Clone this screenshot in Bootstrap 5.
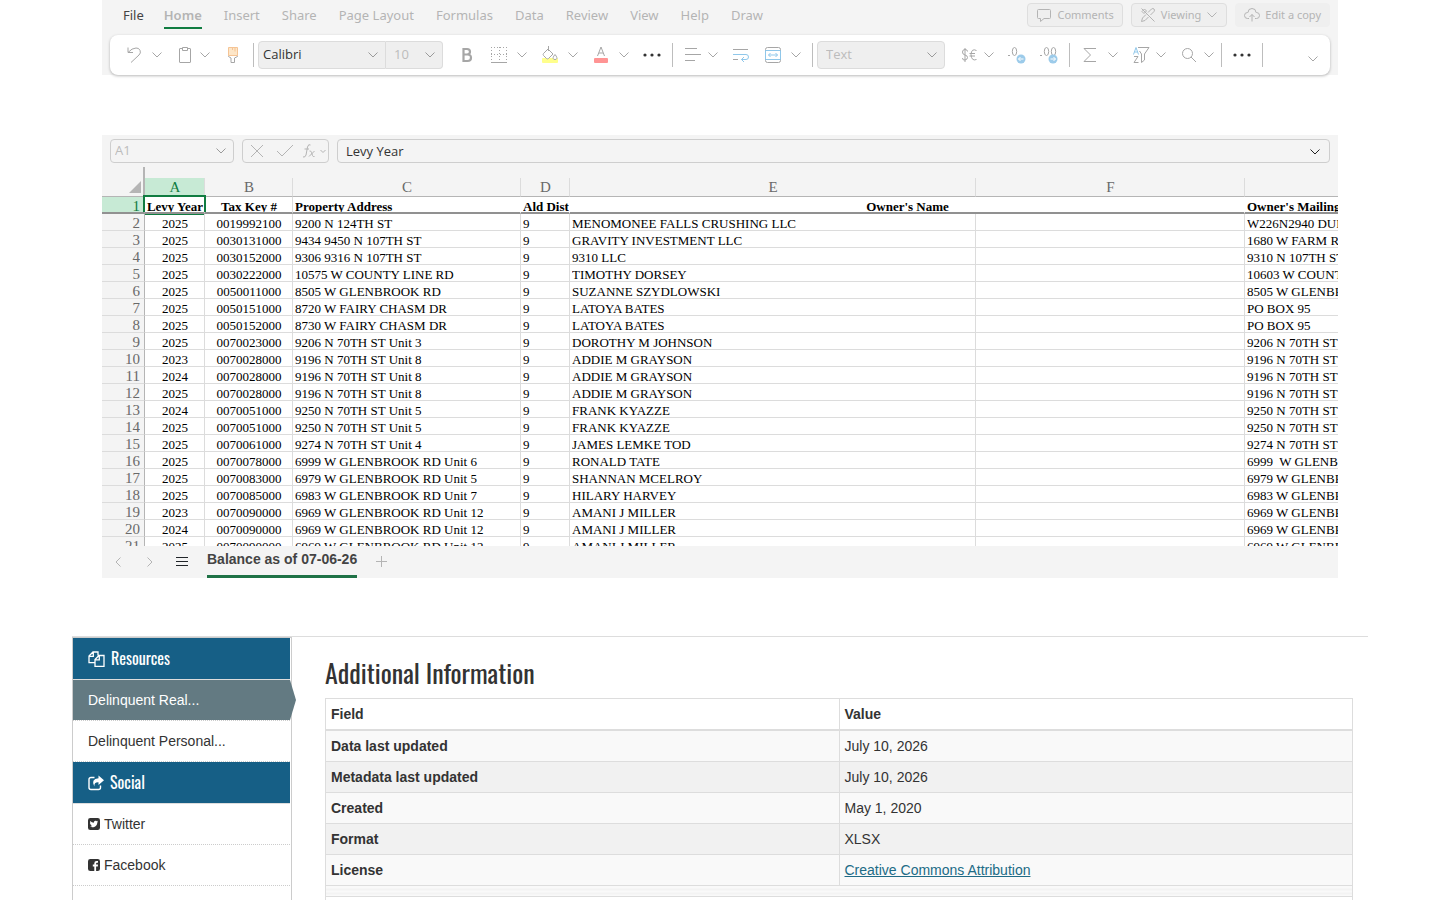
<!DOCTYPE html>
<html lang="en">
<head>
  <meta charset="UTF-8">
  <title>Delinquent Real Estate Tax Accounts</title>
  <meta name="viewport" content="width=device-width, initial-scale=1.0">
  <link href="https://cdn.jsdelivr.net/npm/bootstrap@5.3.3/dist/css/bootstrap.min.css" rel="stylesheet">
  <style>
    body {
      font-family: "Liberation Sans", Arial, sans-serif;
      font-size: 14px;
      line-height: 20px;
      color: #333;
      background: #fff;
    }
    svg {
      display: block;
      fill: none;
      stroke: currentColor;
    }
    .page-wrap {
      padding: 0 72px;
    }
    .viewer {
      margin: 0 30px;
      font-family: "Noto Sans", "Open Sans", sans-serif;
      font-size: 13px;
      color: #b4b4b4;
    }

    /* ribbon */
    .ribbon {
      background: #f4f4f4;
      padding: 0 8px;
      margin-bottom: 60px;
    }
    .ribbon-top {
      height: 35px;
      padding: 3px 0 0 13px;
    }
    .ribbon-nav { gap: 22px; }
    .ribbon-tab {
      color: inherit;
      text-decoration: none;
      height: 26px;
      line-height: 24px;
      border-bottom: 2px solid transparent;
    }
    .ribbon-tab.file-tab {
      color: #444;
      margin-right: -2px;
    }
    .ribbon-tab.active {
      font-weight: 600;
      border-color: #107c41;
    }
    .ribbon-btn {
      display: flex;
      align-items: center;
      gap: 5px;
      height: 24px;
      padding: 0 8px;
      font-size: 11px;
      color: inherit;
      background: #efefef;
      border: 1px solid #dedede;
      border-radius: 4px;
      white-space: nowrap;
    }
    .ribbon-btn.flat { border-color: #efefef; }
    .toolbar {
      height: 40px;
      padding: 0 9px 0 12px;
      gap: 8px;
      background: #fff;
      border-radius: 8px;
      box-shadow: 0 1px 3px rgba(0, 0, 0, .28);
      color: #a6a6a6;
    }
    .toolbar > * { flex-shrink: 0; }
    .tool, .tool-arrow, .plain-btn {
      display: flex;
      align-items: center;
      justify-content: center;
      flex-shrink: 0;
      height: 24px;
      width: 24px;
      padding: 0;
      border: 0;
      background: none;
      color: inherit;
    }
    .tool-arrow { width: 16px; }
    .wide-split { gap: 3px; }
    .tight { margin-left: -4px; }
    .roomy { margin-left: 4px; }
    .rule {
      width: 1px;
      height: 24px;
      background: #bdbdbd;
    }
    .tool-select {
      height: 28px;
      padding: 0 24px 0 8px;
      font-family: "Open Sans", "Noto Sans", sans-serif;
      font-size: 13px;
      color: #bcbcbc;
      border: 1px solid #dcdcdc;
      border-radius: 4px;
      background-color: #efefef;
      background-image: url("data:image/svg+xml,%3Csvg xmlns='http://www.w3.org/2000/svg' viewBox='0 0 12 12' fill='none' stroke='%239a9a9a'%3E%3Cpath d='M1.5 3.5 6 8l4.500-4.500'/%3E%3C/svg%3E");
      background-size: 12px 12px;
      background-position: right 6px center;
    }
    .font-name {
      width: 128px;
      padding-left: 4px;
      color: #333;
      border-radius: 4px 0 0 4px;
    }
    .font-size {
      width: 57px;
      border-left: 0;
      border-radius: 0 4px 4px 0;
    }
    .num-format { width: 128px; }

    /* formula bar */
    .workbook { background: #f4f4f4; }
    .formula-bar {
      padding: 4px 8px;
      gap: 8px;
    }
    .cell-ref {
      width: 124px;
      height: 24px;
      padding-left: 4px;
      background-color: #f4f4f4;
      border-color: #cecece;
    }
    .fx-box {
      width: 87px;
      height: 24px;
      padding-left: 2px;
      border: 1px solid #cecece;
      border-radius: 4px;
    }
    .fx-arrow { width: 12px; }
    .formula-box {
      height: 24px;
      padding-right: 2px;
      border: 1px solid #cecece;
      border-radius: 4px;
      color: #222;
    }
    .formula-input {
      border: 0;
      outline: 0;
      background: none;
      padding: 0 8px;
      font-family: "Open Sans", "Noto Sans", sans-serif;
      font-size: 13px;
      line-height: 20px;
      color: #333;
    }

    /* sheet */
    .freeze-gap {
      height: 11px;
      width: 43px;
      border-right: 2px solid #b5b5b5;
    }
    .sheet-view {
      height: 368px;
      overflow: hidden;
      font-family: "Liberation Serif", "Times New Roman", serif;
    }
    .sheet {
      width: 100%;
      table-layout: fixed;
      border-collapse: separate;
      border-spacing: 0;
      color: #000;
      background: #fff;
    }
    .sheet th, .sheet td {
      height: 17px;
      padding: 0 0 0 2px;
      font-size: 13px;
      line-height: 16px;
      white-space: nowrap;
      overflow: hidden;
      border: 0 solid #dcdcdc;
      border-width: 0 1px 1px 0;
    }
    .sheet .text-center { padding-left: 1px; }
    .sheet tr > :last-child { border-right: 0; }
    .sheet div {
      height: 16px;
      padding-top: 2px;
      overflow: hidden;
    }
    .sheet .letters th {
      height: 19px;
      padding-left: 1px;
      font-size: 15px;
      line-height: 18px;
      font-weight: 400;
      text-align: center;
      color: #696969;
      background: #f4f4f4;
      border-bottom-color: #b5b5b5;
    }
    .sheet .letters .corner {
      border-right: 2px solid #b5b5b5;
    }
    .corner svg {
      margin-left: auto;
      margin-right: 2px;
      fill: #b5b5b5;
      stroke: none;
    }
    .sheet .row-no {
      padding: 0 4px 0 0;
      font-size: 15px;
      font-weight: 400;
      text-align: right;
      color: #696969;
      background: #f4f4f4;
      border-right-color: #b5b5b5;
    }
    .sheet .letters .picked, .sheet .row-no.picked {
      color: #107c41;
      background: #c7ead5;
    }
    .sheet .titles th {
      border-bottom: 2px solid #919191;
    }
    .sheet .titles div { height: 15px; }
    .sheet .row-no div { padding-top: 1px; }
    .sheet .titles th:nth-child(n+4) { border-right-color: transparent; }
    .sheet .titles .active-cell {
      position: relative;
      overflow: visible;
    }
    .active-cell::after {
      content: "";
      position: absolute;
      inset: -2px -2px 0 -2px;
      border: 2px solid #107c41;
      border-bottom: 0;
    }
    #sheetRows tr:first-child td:nth-child(2) { box-shadow: inset 0 1px #107c41; }
    .sheet-bar {
      height: 32px;
      padding-left: 4px;
      gap: 8px;
    }
    .sheet-tab {
      height: 32px;
      margin: 0 5px;
      line-height: 27px;
      font-family: "Liberation Sans", Arial, sans-serif;
      font-size: 14px;
      font-weight: 700;
      color: #444;
      text-decoration: none;
      border-bottom: 3px solid #1f7246;
    }

    /* dataset details */
    .details {
      margin-top: 58px;
      border-top: 1px solid #ddd;
    }
    .side-nav {
      width: 220px;
      border: 1px solid #ccc;
      border-bottom: 0;
      padding-right: 1px;
    }
    .narrow-head {
      font-family: Oswald, "Liberation Sans Narrow", "Roboto Condensed", "Liberation Sans", sans-serif;
      font-weight: 400;
    }
    .side-title {
      display: flex;
      align-items: center;
      gap: 6px;
      height: 42px;
      margin: 0;
      padding: 0 15px;
      font-size: 16px;
      color: #fff;
      background: #165f86;
      border-bottom: 1px solid #ddd;
    }
    .side-link {
      display: flex;
      align-items: center;
      gap: 4px;
      height: 41px;
      padding: 0 15px;
      color: #333;
      text-decoration: none;
      border-bottom: 1px dotted #ccc;
    }
    .side-link.active {
      position: relative;
      color: #fff;
      background: #637a82;
      background-clip: padding-box;
    }
    .side-link.active::after {
      content: "";
      position: absolute;
      left: 100%;
      top: 0;
      width: 6px;
      height: 100%;
      background: #637a82;
      clip-path: polygon(0 0, 100% 50%, 0 100%);
    }
    .details-main { padding: 16px 15px 0 33px; }
    .details-title {
      font-size: 26px;
      line-height: 40px;
      margin: 0 0 5px;
    }
    .info-table {
      margin: 0;
      table-layout: fixed;
      border-color: #ddd;
    }
    .info-table > :not(caption) > * > * {
      padding: 5px;
      color: #333;
      border: 1px solid #ddd;
      background: #f9f9f9;
    }
    .info-table > thead > tr > th {
      background: #fff;
      border-bottom: 2px solid #ddd;
    }
    .info-table > tbody > tr:nth-child(even) > * { background: #f1f1f1; }
    .info-table > tbody > tr.folded > td {
      height: 11px;
      padding: 0;
      background: repeating-linear-gradient(#f9f9f9 0 2px, #f3f3f3 2px 4px);
    }
    .info-table a { color: #206b86; }
    .info-rest {
      border: 1px solid #ddd;
      border-width: 0 1px;
    }
  </style>
</head>
<body>

<svg class="d-none">
  <symbol id="chev" viewBox="0 0 12 12"><path d="M1.500 3.500 6 8l4.500-4.500"/></symbol>
  <symbol id="dots" viewBox="0 0 20 6"><g fill="#333" stroke="none"><circle cx="3" cy="3" r="1.600"/><circle cx="10" cy="3" r="1.600"/><circle cx="17" cy="3" r="1.600"/></g></symbol>
</svg>

<div class="page-wrap d-flex flex-column min-vh-100">
  <div class="viewer">

    <div class="ribbon">
      <div class="ribbon-top d-flex justify-content-between align-items-start">
        <nav class="ribbon-nav d-flex">
          <a class="ribbon-tab file-tab" href="#">File</a>
          <a class="ribbon-tab active" href="#">Home</a>
          <a class="ribbon-tab" href="#">Insert</a>
          <a class="ribbon-tab" href="#">Share</a>
          <a class="ribbon-tab" href="#">Page Layout</a>
          <a class="ribbon-tab" href="#">Formulas</a>
          <a class="ribbon-tab" href="#">Data</a>
          <a class="ribbon-tab" href="#">Review</a>
          <a class="ribbon-tab" href="#">View</a>
          <a class="ribbon-tab" href="#">Help</a>
          <a class="ribbon-tab" href="#">Draw</a>
        </nav>
        <div class="d-flex gap-2">
          <button class="ribbon-btn" type="button">
            <svg width="16" height="16" viewBox="0 0 16 16"><path d="M2.500 2.500h11a1 1 0 0 1 1 1v7a1 1 0 0 1-1 1H8L4.500 14.500v-3h-2a1 1 0 0 1-1-1v-7a1 1 0 0 1 1-1z"/></svg>
            Comments
          </button>
          <button class="ribbon-btn" type="button">
            <svg width="16" height="16" viewBox="0 0 16 16"><path d="m1.500 1.500 13 13M6 7.500 2.500 11l-1 3.500L5 13.500 8.500 10M8 5.500l3.500-3.500q1.500-1 2.500 0t0 2.500L10.500 8M2 4.500 4.500 2l2 2-2.500 2.500z"/></svg>
            Viewing
            <svg width="12" height="12"><use href="#chev"/></svg>
          </button>
          <button class="ribbon-btn flat" type="button">
            <svg width="16" height="16" viewBox="0 0 16 16"><path d="M5 11.500H3.500a3 3 0 0 1 0-6h.5a4 4 0 0 1 8 0h.5a3 3 0 0 1 0 6H11M8 14.500v-7M5.500 10 8 7.500l2.500 2.500"/></svg>
            Edit a copy
          </button>
        </div>
      </div>

      <div class="toolbar d-flex align-items-center">
        <div class="d-flex wide-split">
          <button class="tool" type="button" aria-label="Undo"><svg width="16" height="18" viewBox="0 0 16 18"><path d="M2 1.500v5h5M2 6.500q4-4.500 8-4.500a4 4 0 0 1 3 7L5 16.500"/></svg></button>
          <button class="tool-arrow" type="button" aria-label="Undo list"><svg width="12" height="12"><use href="#chev"/></svg></button>
        </div>
        <div class="d-flex">
          <button class="tool" type="button" aria-label="Paste"><svg width="14" height="18" viewBox="0 0 14 18"><path d="M4 2.500H2a.5.5 0 0 0-.5.5v13a.5.5 0 0 0 .5.500h10a.5.5 0 0 0 .5-.5V3a.5.5 0 0 0-.5-.5h-2M4.500 1.500h5v3h-5z"/></svg></button>
          <button class="tool-arrow" type="button" aria-label="Paste options"><svg width="12" height="12"><use href="#chev"/></svg></button>
        </div>
        <button class="tool" type="button" aria-label="Format painter"><svg width="12" height="18" viewBox="0 0 12 18"><path d="M1.500 9.500v1l2.500 1.500v4.500h3.500V12l3-1.500v-1"/><path fill="#fde6c8" stroke="#f5c495" d="M1.500 1.500h9v8h-9z"/><path stroke="#f5c495" d="M5.500 1.500V4M8 1.500v4"/></svg></button>
        <span class="rule"></span>
        <div class="d-flex tight">
          <select class="form-select tool-select font-name" aria-label="Font"><option>Calibri</option></select>
          <select class="form-select tool-select font-size" aria-label="Font size"><option>10</option></select>
        </div>
        <button class="tool roomy" type="button" aria-label="Bold"><svg width="12" height="16" viewBox="0 0 12 16"><path stroke-width="2.200" d="M2.500 2v12h4q3.500 0 3.500-3.300T6.500 7.500h-4H6q3-.2 3-2.800T6 2z"/></svg></button>
        <div class="d-flex wide-split">
          <button class="tool" type="button" aria-label="Borders"><svg width="18" height="18" viewBox="0 0 18 18"><path stroke-dasharray="1 2" d="M1 1.500h16M1 8.500h16M1.500 1v15M9.500 1v15M16.500 1v15"/><path d="M1 16.500h16"/></svg></button>
          <button class="tool-arrow" type="button" aria-label="Border list"><svg width="12" height="12"><use href="#chev"/></svg></button>
        </div>
        <div class="d-flex wide-split">
          <button class="tool" type="button" aria-label="Fill color"><svg width="18" height="18" viewBox="0 0 18 18"><rect x="1" y="12" width="16" height="5" rx="1" fill="#ffff8c" stroke="none"/><path fill="#fff" d="m7 3 5 5-4.500 4.500q-1 .8-2 0l-3-3q-.8-1 0-2zM7.500 0v5M14 8.500q3 3.500 1.300 4.700-1.300.8-2.600 0Q11 12 14 8.500z"/></svg></button>
          <button class="tool-arrow" type="button" aria-label="Fill colors"><svg width="12" height="12"><use href="#chev"/></svg></button>
        </div>
        <div class="d-flex wide-split">
          <button class="tool" type="button" aria-label="Font color"><svg width="16" height="18" viewBox="0 0 16 18"><rect x="1" y="12" width="14" height="5" rx="1" fill="#ff9494" stroke="none"/><path d="m4.500 10 3.500-9 3.500 9M6 7h4"/></svg></button>
          <button class="tool-arrow" type="button" aria-label="Font colors"><svg width="12" height="12"><use href="#chev"/></svg></button>
        </div>
        <button class="tool" type="button" aria-label="More font options"><svg width="20" height="6"><use href="#dots"/></svg></button>
        <span class="rule"></span>
        <div class="d-flex">
          <button class="tool" type="button" aria-label="Alignment"><svg width="18" height="16" viewBox="0 0 18 16"><path d="M1 1.500h12M1 7.500h16M1 13.500h10"/></svg></button>
          <button class="tool-arrow" type="button" aria-label="Alignment list"><svg width="12" height="12"><use href="#chev"/></svg></button>
        </div>
        <button class="tool" type="button" aria-label="Wrap text"><svg width="18" height="16" viewBox="0 0 18 16"><path d="M1 2.500h15M1 12.500h5"/><path stroke="#8fc7ea" d="M1 7.500h13a2.500 2.500 0 0 1 0 5H9.500M12 10l-2.500 2.500L12 15"/></svg></button>
        <div class="d-flex wide-split">
          <button class="tool" type="button" aria-label="Merge cells"><svg width="18" height="16" viewBox="0 0 18 16"><rect x="1.500" y=".5" width="15" height="15" rx="2"/><path stroke="#8fc7ea" d="M1.500 3.500h15v9h-15zM4.500 8h9M6.500 6l-2 2 2 2M11.500 6l2 2-2 2"/></svg></button>
          <button class="tool-arrow" type="button" aria-label="Merge list"><svg width="12" height="12"><use href="#chev"/></svg></button>
        </div>
        <span class="rule"></span>
        <select class="form-select tool-select num-format tight" aria-label="Number format"><option>Text</option></select>
        <div class="d-flex roomy">
          <button class="tool" type="button" aria-label="Currency"><svg width="16" height="16" viewBox="0 0 16 16"><path d="M6.500 4.500q0-2-2.500-2t-2.500 2.500T4 8t2.500 2.500-2.500 2.500-2.500-2M4 1v14M15.500 3.500q-5-2.500-5.500 4 .5 7 5.500 5M8.500 6.500H14M8.500 9H14"/></svg></button>
          <button class="tool-arrow" type="button" aria-label="Currency list"><svg width="12" height="12"><use href="#chev"/></svg></button>
        </div>
        <button class="tool" type="button" aria-label="Increase decimal"><svg width="18" height="18" viewBox="0 0 18 18"><path d="M0 9.500h2"/><ellipse cx="6.500" cy="5.500" rx="2.200" ry="4"/><circle cx="13" cy="13" r="4.500" fill="#9ccbea" stroke="none"/><path stroke="#fff" d="M15.500 13h-5M12.500 11l-2 2 2 2"/></svg></button>
        <button class="tool" type="button" aria-label="Decrease decimal"><svg width="18" height="18" viewBox="0 0 18 18"><path d="M0 9.500h2"/><ellipse cx="6.500" cy="5.500" rx="2.200" ry="4"/><ellipse cx="13.500" cy="5.500" rx="2.200" ry="4"/><circle cx="13" cy="13" r="4.500" fill="#9ccbea" stroke="none"/><path stroke="#fff" d="M10.500 13h5M13.500 11l2 2-2 2"/></svg></button>
        <span class="rule"></span>
        <div class="d-flex wide-split">
          <button class="tool" type="button" aria-label="AutoSum"><svg width="16" height="16" viewBox="0 0 16 16"><path d="M14 1.500H2L8.500 8 2 14.500h12"/></svg></button>
          <button class="tool-arrow" type="button" aria-label="Functions"><svg width="12" height="12"><use href="#chev"/></svg></button>
        </div>
        <div class="d-flex">
          <button class="tool" type="button" aria-label="Sort and filter"><svg width="18" height="18" viewBox="0 0 18 18"><path stroke="#8fc7ea" d="m1.500 8.500 2.500-7 2.500 7M2.500 6h3"/><path d="M2 10.500h4l-4 6h4.500M6 1.500h11L12.500 8v6L9.500 16.500V8L7.500 5"/></svg></button>
          <button class="tool-arrow" type="button" aria-label="Sort list"><svg width="12" height="12"><use href="#chev"/></svg></button>
        </div>
        <div class="d-flex">
          <button class="tool" type="button" aria-label="Find"><svg width="16" height="16" viewBox="0 0 16 16"><circle cx="6.500" cy="6.500" r="5"/><path d="m10 10 5 5"/></svg></button>
          <button class="tool-arrow" type="button" aria-label="Find list"><svg width="12" height="12"><use href="#chev"/></svg></button>
        </div>
        <span class="rule tight"></span>
        <button class="tool" type="button" aria-label="More commands"><svg width="20" height="6"><use href="#dots"/></svg></button>
        <span class="rule"></span>
        <button class="tool-arrow ms-auto align-self-end mb-1" type="button" aria-label="Ribbon layout"><svg width="12" height="12"><use href="#chev"/></svg></button>
      </div>
    </div>

    <div class="workbook">
      <div class="formula-bar d-flex">
        <select class="form-select tool-select cell-ref flex-shrink-0" aria-label="Cell"><option>A1</option></select>
        <div class="fx-box d-flex align-items-center flex-shrink-0">
          <button class="plain-btn" type="button" aria-label="Cancel"><svg width="14" height="14" viewBox="0 0 14 14"><path d="m1 1 12 12M13 1 1 13"/></svg></button>
          <button class="plain-btn ms-1" type="button" aria-label="Enter"><svg width="18" height="14" viewBox="0 0 18 14"><path d="m1 7 5 5L17 1"/></svg></button>
          <button class="plain-btn" type="button" aria-label="Insert function"><svg width="14" height="16" viewBox="0 0 14 16"><path d="M8.500 2Q6.500.5 5.500 4L4 12q-.6 2.500-3 2M2.500 6h4.500M7.500 8q1.500-.5 2 1.500l1 3q.5 1.500 2 1M12.500 8 7 13.500"/></svg></button>
          <button class="plain-btn fx-arrow tight" type="button" aria-label="Function list"><svg width="8" height="8" viewBox="0 0 8 8"><path d="M1.500 3 4 5.500 6.500 3"/></svg></button>
        </div>
        <div class="formula-box d-flex flex-grow-1">
          <input class="formula-input flex-grow-1" type="text" value="Levy Year" aria-label="Formula">
          <button class="plain-btn" type="button" aria-label="Expand formula bar"><svg width="12" height="12"><use href="#chev"/></svg></button>
        </div>
      </div>

      <div class="freeze-gap"></div>
      <div class="sheet-view">
        <table class="sheet">
          <colgroup>
            <col style="width: 43px"><col style="width: 60px"><col style="width: 88px"><col style="width: 228px">
            <col style="width: 49px"><col style="width: 406px"><col style="width: 269px"><col>
          </colgroup>
          <thead>
            <tr class="letters">
              <th class="corner"><svg width="12" height="12" viewBox="0 0 12 12"><path d="M12 0v12H0z"/></svg></th>
              <th class="picked">A</th><th>B</th><th>C</th><th>D</th><th>E</th><th>F</th><th></th>
            </tr>
            <tr class="titles">
              <th class="row-no picked"><div>1</div></th>
              <th class="active-cell text-center"><div>Levy Year</div></th>
              <th class="text-center"><div>Tax Key #</div></th>
              <th><div>Property Address</div></th>
              <th><div>Ald Dist</div></th>
              <th class="text-center" colspan="2"><div>Owner's Name</div></th>
              <th><div>Owner's Mailing Address</div></th>
            </tr>
          </thead>
          <tbody id="sheetRows"></tbody>
        </table>
      </div>

      <div class="sheet-bar d-flex align-items-center">
        <button class="plain-btn" type="button" aria-label="Previous sheet"><svg width="8" height="12" viewBox="0 0 8 12"><path d="M6.500 1.500 2 6l4.500 4.500"/></svg></button>
        <button class="plain-btn" type="button" aria-label="Next sheet"><svg width="8" height="12" viewBox="0 0 8 12"><path d="M1.500 1.500 6 6l-4.500 4.500"/></svg></button>
        <button class="plain-btn text-dark" type="button" aria-label="All sheets"><svg width="12" height="12" viewBox="0 0 12 12"><path d="M0 1.500h12M0 5.500h12M0 9.500h12"/></svg></button>
        <a class="sheet-tab" href="#">Balance as of 07-06-26</a>
        <button class="plain-btn" type="button" aria-label="Add sheet"><svg width="12" height="12" viewBox="0 0 12 12"><path d="M5.500 0v11M0 5.500h11"/></svg></button>
      </div>
    </div>
  </div>

  <div class="details d-flex flex-grow-1">
    <aside class="side-nav flex-shrink-0">
      <h2 class="side-title narrow-head">
        <svg width="17" height="16" viewBox="0 0 17 16"><path stroke-width="1.300" d="M7 11.700H1V5l4-4h5v3.500M5.300 1v4.300H1M11 4.500h5v11H7V8.500zM11.300 4.500v4.300H7"/></svg>
        Resources
      </h2>
      <a class="side-link active" href="#">Delinquent Real...</a>
      <a class="side-link" href="#">Delinquent Personal...</a>
      <h2 class="side-title narrow-head">
        <svg width="16" height="16" viewBox="0 0 16 16"><path stroke-width="1.400" d="M6.500 2.500H3a2 2 0 0 0-2 2v8a2 2 0 0 0 2 2h7.500a2 2 0 0 0 2-2V10.500"/><path fill="#fff" stroke="none" d="M10.500.5 16 5.200l-5.500 4.800V7.200Q6 6.900 6.300 11.500 2.500 4 10.500 3.300z"/></svg>
        Social
      </h2>
      <a class="side-link" href="#">
        <svg width="12" height="12" viewBox="0 0 12 12"><rect width="12" height="12" rx="2.300" fill="#333" stroke="none"/><path fill="#fff" stroke="none" d="M10.200 3.500l-.9.9c0 3.600-3.900 6.200-7.400 4.200q1.400 0 2.200-.7-1.100-.1-1.500-1.100h.7Q2 6.400 1.900 5l.7.200Q1.600 4.200 2.200 3q1.500 1.700 3.700 1.800c-.3-1.900 1.700-2.700 2.800-1.600l1-.4-.5.900z"/></svg>
        Twitter
      </a>
      <a class="side-link" href="#">
        <svg width="12" height="12" viewBox="0 0 12 12"><rect width="12" height="12" rx="2.300" fill="#333" stroke="none"/><path fill="#fff" stroke="none" d="M6.300 12V7.400H4.800V5.600h1.500V4.300q0-2.300 2.300-2.300h1.400v1.700h-1q-.9 0-.9.9v1H10l-.2 1.800H8.100V12z"/></svg>
        Facebook
      </a>
    </aside>

    <main class="details-main d-flex flex-column flex-grow-1">
      <h3 class="details-title narrow-head">Additional Information</h3>
      <table class="table info-table">
        <thead>
          <tr><th scope="col">Field</th><th scope="col">Value</th></tr>
        </thead>
        <tbody>
          <tr><th scope="row">Data last updated</th><td>July 10, 2026</td></tr>
          <tr><th scope="row">Metadata last updated</th><td>July 10, 2026</td></tr>
          <tr><th scope="row">Created</th><td>May 1, 2020</td></tr>
          <tr><th scope="row">Format</th><td>XLSX</td></tr>
          <tr><th scope="row">License</th><td><a href="#">Creative Commons Attribution</a></td></tr>
          <tr class="folded"><td colspan="2"></td></tr>
        </tbody>
      </table>
      <div class="info-rest flex-grow-1"></div>
    </main>
  </div>
</div>

<script>
  // year, tax key, address, district, owner, mailing address
  const rows = [
    ["2025", "0019992100", "9200 N 124TH ST", "9", "MENOMONEE FALLS CRUSHING LLC", "W226N2940 DUPLAINVILLE"],
    ["2025", "0030131000", "9434 9450 N 107TH ST", "9", "GRAVITY INVESTMENT LLC", "1680 W FARM RD"],
    ["2025", "0030152000", "9306 9316 N 107TH ST", "9", "9310 LLC", "9310 N 107TH ST"],
    ["2025", "0030222000", "10575 W COUNTY LINE RD", "9", "TIMOTHY DORSEY", "10603 W COUNTY LINE"],
    ["2025", "0050011000", "8505 W GLENBROOK RD", "9", "SUZANNE SZYDLOWSKI", "8505 W GLENBROOK RD"],
    ["2025", "0050151000", "8720 W FAIRY CHASM DR", "9", "LATOYA BATES", "PO BOX 95"],
    ["2025", "0050152000", "8730 W FAIRY CHASM DR", "9", "LATOYA BATES", "PO BOX 95"],
    ["2025", "0070023000", "9206 N 70TH ST Unit 3", "9", "DOROTHY M JOHNSON", "9206 N 70TH ST"],
    ["2023", "0070028000", "9196 N 70TH ST Unit 8", "9", "ADDIE M GRAYSON", "9196 N 70TH ST"],
    ["2024", "0070028000", "9196 N 70TH ST Unit 8", "9", "ADDIE M GRAYSON", "9196 N 70TH ST"],
    ["2025", "0070028000", "9196 N 70TH ST Unit 8", "9", "ADDIE M GRAYSON", "9196 N 70TH ST"],
    ["2024", "0070051000", "9250 N 70TH ST Unit 5", "9", "FRANK KYAZZE", "9250 N 70TH ST"],
    ["2025", "0070051000", "9250 N 70TH ST Unit 5", "9", "FRANK KYAZZE", "9250 N 70TH ST"],
    ["2025", "0070061000", "9274 N 70TH ST Unit 4", "9", "JAMES LEMKE TOD", "9274 N 70TH ST"],
    ["2025", "0070078000", "6999 W GLENBROOK RD Unit 6", "9", "RONALD TATE", "6999&nbsp; W GLENBROOK RD"],
    ["2025", "0070083000", "6979 W GLENBROOK RD Unit 5", "9", "SHANNAN MCELROY", "6979 W GLENBROOK RD"],
    ["2025", "0070085000", "6983 W GLENBROOK RD Unit 7", "9", "HILARY HARVEY", "6983 W GLENBROOK RD"],
    ["2023", "0070090000", "6969 W GLENBROOK RD Unit 12", "9", "AMANI J MILLER", "6969 W GLENBROOK RD"],
    ["2024", "0070090000", "6969 W GLENBROOK RD Unit 12", "9", "AMANI J MILLER", "6969 W GLENBROOK RD"],
    ["2025", "0070090000", "6969 W GLENBROOK RD Unit 12", "9", "AMANI J MILLER", "6969 W GLENBROOK RD"]
  ];

  document.getElementById("sheetRows").innerHTML = rows.map(([year, key, address, dist, owner, mailing], i) => `
    <tr>
      <th class="row-no" scope="row"><div>${i + 2}</div></th>
      <td class="text-center"><div>${year}</div></td>
      <td class="text-center"><div>${key}</div></td>
      <td><div>${address}</div></td>
      <td><div>${dist}</div></td>
      <td><div>${owner}</div></td>
      <td></td>
      <td><div>${mailing}</div></td>
    </tr>`).join("");
</script>
<script src="https://cdn.jsdelivr.net/npm/bootstrap@5.3.3/dist/js/bootstrap.bundle.min.js"></script>
</body>
</html>
